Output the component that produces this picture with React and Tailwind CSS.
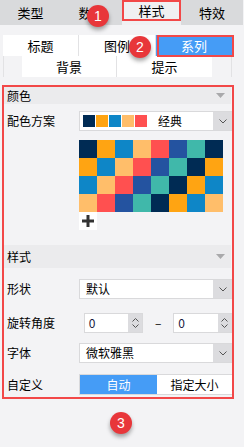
import React from "react";

const palette = ["#002b54", "#ffa412", "#0e86c7", "#ffbe6a", "#ff5050", "#2453a0", "#40b8aa"];

function Chevron() {
  return (
    <svg width="8" height="5" viewBox="0 0 8 5">
      <polyline points="0.5,0.5 4,4 7.5,0.5" fill="none" stroke="#555" strokeWidth="1" />
    </svg>
  );
}

function Caret() {
  return (
    <svg width="9" height="5" viewBox="0 0 9 5">
      <polygon points="0,0 9,0 4.5,5" fill="#a9a9ab" />
    </svg>
  );
}

function Select({ children }) {
  return (
    <div className="flex-1 h-[20px] flex bg-white border border-[#d9d9db]">
      <div className="flex-1 flex items-center pl-[6px] text-[12px] text-black">{children}</div>
      <div className="w-[19px] bg-[#dcdcdf] flex items-center justify-center">
        <Chevron />
      </div>
    </div>
  );
}

function NumberInput() {
  return (
    <div className="w-[60px] h-[20px] flex border border-[#d9d9db] bg-white">
      <div className="flex-1 flex items-center pl-[4px] text-[12px] text-[#1a1a40]">0</div>
      <div className="w-[14px] bg-[#dcdcdf] flex flex-col items-center justify-center gap-[2px]">
        <svg width="7" height="4" viewBox="0 0 7 4">
          <polyline points="0.5,3.5 3.5,0.5 6.5,3.5" fill="none" stroke="#555" strokeWidth="1" />
        </svg>
        <svg width="7" height="4" viewBox="0 0 7 4">
          <polyline points="0.5,0.5 3.5,3.5 6.5,0.5" fill="none" stroke="#555" strokeWidth="1" />
        </svg>
      </div>
    </div>
  );
}

function Badge({ n, className }) {
  return (
    <div
      className={`absolute w-[22px] h-[22px] rounded-full bg-[#e8363a] text-white text-[14px] flex items-center justify-center shadow-[0_3px_4px_rgba(0,0,0,0.35)] font-['Liberation_Sans',sans-serif] ${className}`}
    >
      {n}
    </div>
  );
}

export default function App() {
  const cells = Array.from({ length: 32 }, (_, i) => palette[i % 7]);

  return (
    <div className="relative w-[244px] h-[447px] overflow-hidden bg-[#f3f3f5] font-['Noto_Sans_CJK_SC','Noto_Sans',sans-serif] text-black">
      {/* Top tabs */}
      <div className="flex h-[25px] bg-[#d9dadc] text-[13px]">
        <div className="w-[61px] flex items-center justify-center">类型</div>
        <div className="w-[61px] flex items-center justify-center">数据</div>
        <div className="w-[59px] flex items-center justify-center bg-[#f0f0f2] pb-[4px]">样式</div>
        <div className="w-[62px] flex items-center justify-center">特效</div>
        <div className="flex-1 bg-[#f3f3f5]" />
      </div>

      {/* Sub tabs */}
      <div className="mt-[10px] mx-[3px] w-[229px] text-[13px]">
        <div className="flex h-[21px]">
          <div className="w-[76px] bg-white flex items-center justify-center border-r border-[#e2e2e4]">标题</div>
          <div className="w-[77px] bg-white flex items-center justify-center border-r border-[#e2e2e4]">图例</div>
          <div className="flex-1 bg-[#459cf6] text-white flex items-center justify-center">系列</div>
        </div>
        <div className="flex h-[21px] border-l border-r border-[#e2e2e4]">
          <div className="w-[18px] bg-[#f3f3f5]" />
          <div className="w-[95px] bg-white flex items-center justify-center border-r border-[#e2e2e4]">背景</div>
          <div className="w-[95px] bg-white flex items-center justify-center">提示</div>
          <div className="flex-1" />
        </div>
      </div>

      {/* Panel */}
      <div className="mt-[8px] w-[233px] text-[12px]">
        <div className="h-[19px] mx-[2px] pt-[2px] bg-[#ebebed] flex items-center justify-between pl-[5px] pr-[6px]">
          <span>颜色</span>
          <Caret />
        </div>

        <div className="flex items-center mt-[7px] pl-[7px]">
          <div className="w-[72px]">配色方案</div>
          <div className="flex-1 h-[20px] flex bg-white border border-[#d9d9db]">
            <div className="flex-1 flex items-center pl-[3px] gap-[1px]">
              {palette.slice(0, 5).map((c) => (
                <div key={c} className="w-[12px] h-[12px]" style={{ backgroundColor: c }} />
              ))}
              <span className="ml-[10px]">经典</span>
            </div>
            <div className="w-[19px] bg-[#dcdcdf] flex items-center justify-center">
              <Chevron />
            </div>
          </div>
        </div>

        <div className="ml-[79px] mt-[9px] grid grid-cols-[repeat(8,18px)] w-[144px]">
          {cells.map((c, i) => (
            <div key={i} className="h-[18px]" style={{ backgroundColor: c }} />
          ))}
        </div>
        <div className="ml-[79px] w-[18px] h-[18px] bg-white flex items-center justify-center">
          <svg width="14" height="14" viewBox="0 0 14 14">
            <path d="M7 1v12M1 7h12" stroke="#333" strokeWidth="3" />
          </svg>
        </div>

        <div className="h-[23px] mx-[2px] mt-[15px] bg-[#ebebed] flex items-center justify-between pl-[5px] pr-[6px]">
          <span>样式</span>
          <Caret />
        </div>

        <div className="flex items-center mt-[11px] pl-[7px]">
          <div className="w-[72px]">形状</div>
          <Select>默认</Select>
        </div>

        <div className="flex items-center mt-[14px] pl-[7px]">
          <div className="w-[77px]">旋转角度</div>
          <NumberInput />
          <div className="w-[30px] text-center">–</div>
          <NumberInput />
        </div>

        <div className="flex items-center mt-[10px] pl-[7px]">
          <div className="w-[72px]">字体</div>
          <Select>微软雅黑</Select>
        </div>

        <div className="flex items-center mt-[11px] pl-[7px]">
          <div className="w-[72px]">自定义</div>
          <div className="flex-1 h-[21px] flex border border-[#d9d9db] bg-white">
            <div className="w-[77px] bg-[#459cf6] text-white flex items-center justify-center">自动</div>
            <div className="flex-1 flex items-center justify-center">指定大小</div>
          </div>
        </div>
      </div>

      {/* Annotations */}
      <div className="absolute left-[122px] top-0 w-[59px] h-[21px] border-2 border-[#f24848] pointer-events-none" />
      <div className="absolute left-[157px] top-[35px] w-[77px] h-[22px] border-2 border-[#f24848] pointer-events-none" />
      <div className="absolute left-[2px] top-[85px] w-[232px] h-[314px] border-2 border-[#f24848] pointer-events-none" />
      <Badge n="1" className="left-[87px] top-[5px]" />
      <Badge n="2" className="left-[129px] top-[36px]" />
      <Badge n="3" className="left-[110px] top-[412px]" />
    </div>
  );
}
